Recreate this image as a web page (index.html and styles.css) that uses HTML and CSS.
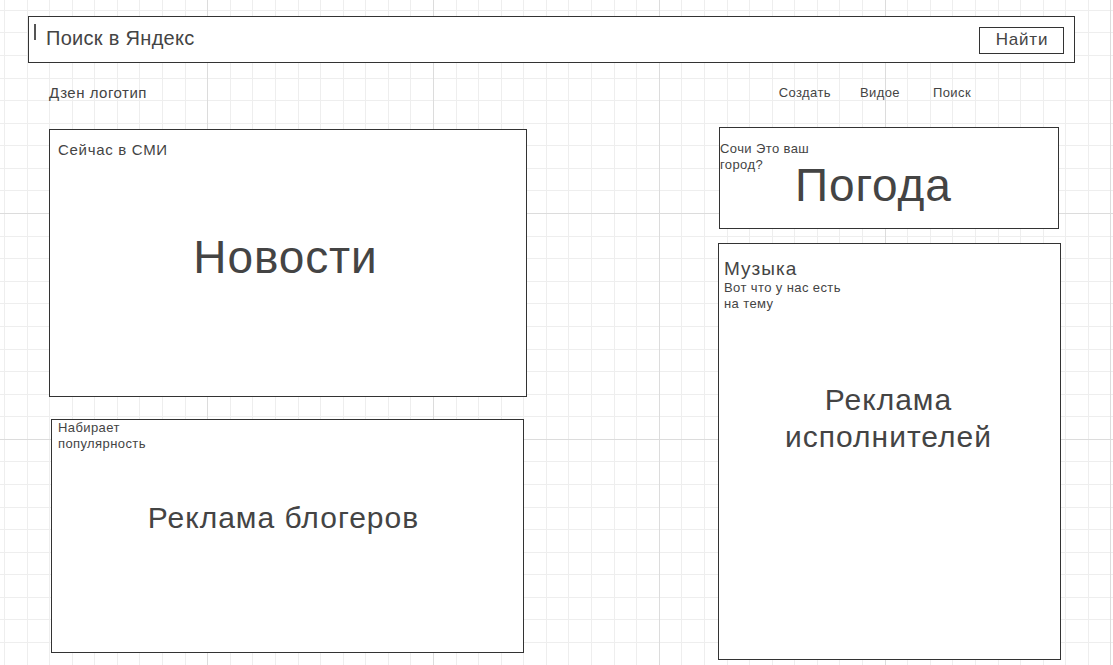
FILE: index.html
```html
<!DOCTYPE html>
<html lang="ru">
<head>
<meta charset="utf-8">
<title>Яндекс макет</title>
<link rel="stylesheet" href="styles.css">
</head>
<body>
<div class="page">
  <header class="search">
    <span class="caret"></span>
    <span class="search-text">Поиск в Яндекс</span>
    <button class="find">Найти</button>
  </header>
  <nav class="nav">
    <span class="logo">Дзен логотип</span>
    <div class="links">
      <span class="link">Создать</span>
      <span class="link">Видое</span>
      <span class="link link-last">Поиск</span>
    </div>
  </nav>
  <main class="main">
    <section class="col-left">
      <div class="box news">
        <div class="small-title">Сейчас в СМИ</div>
        <div class="big news-big">Новости</div>
      </div>
      <div class="box blogs">
        <div class="note">Набирает<br>популярность</div>
        <div class="mid blogs-big">Реклама блогеров</div>
      </div>
    </section>
    <section class="col-right">
      <div class="box weather">
        <div class="note weather-note">Сочи Это ваш<br>город?</div>
        <div class="big weather-big">Погода</div>
      </div>
      <div class="box music">
        <div class="music-title">Музыка</div>
        <div class="note music-note">Вот что у нас есть<br>на тему</div>
        <div class="mid music-big">Реклама<br>исполнителей</div>
      </div>
    </section>
  </main>
</div>
</body>
</html>
```
FILE: styles.css
```css
html, body {
  margin: 0;
  padding: 0;
  height: 100%;
}
body {
  font-family: "Liberation Sans", Arial, sans-serif;
  color: #444;
  background-color: #fff;
  background-image:
    repeating-linear-gradient(to right, transparent 0 207.2px, #dcdcdc 207.2px 208.2px, transparent 208.2px 225.8px),
    repeating-linear-gradient(to bottom, transparent 0 213px, #dcdcdc 213px 214px, transparent 214px 225.8px),
    repeating-linear-gradient(to right, transparent 0 4px, #eeeeee 4px 5px, transparent 5px 22.58px),
    repeating-linear-gradient(to bottom, transparent 0 9.8px, #eeeeee 9.8px 10.8px, transparent 10.8px 22.58px);
  overflow: hidden;
}
.page {
  padding-top: 16px;
}
.search {
  box-sizing: border-box;
  margin-left: 28px;
  width: 1047px;
  height: 47px;
  border: 1px solid #333;
  background: #fff;
  display: flex;
  align-items: center;
  position: relative;
}
.caret {
  position: absolute;
  left: 5px;
  top: 7px;
  width: 2px;
  height: 16px;
  background: #555;
}
.search-text {
  margin-left: 17px;
  margin-top: -3px;
  font-size: 20px;
  letter-spacing: 0.3px;
}
.find {
  margin-left: auto;
  margin-right: 10px;
  margin-top: 1px;
  box-sizing: border-box;
  width: 85px;
  height: 27px;
  border: 1px solid #333;
  background: #fff;
  font-family: inherit;
  font-size: 17px;
  letter-spacing: 0.8px;
  color: #444;
  padding: 0 0 0 1px;
}
.nav {
  display: flex;
  align-items: center;
  margin: 20px 0 0 49px;
  height: 18px;
}
.logo {
  font-size: 15px;
  letter-spacing: 0.5px;
}
.links {
  display: flex;
  margin-left: auto;
  margin-right: 142px;
  gap: 29px;
  font-size: 13px;
  letter-spacing: 0.4px;
}
.link-last {
  margin-left: 4px;
}
.main {
  display: flex;
  margin-top: 28px;
}
.col-left {
  margin-left: 49px;
  width: 478px;
}
.col-right {
  margin-left: 191px;
  margin-top: -2px;
  width: 343px;
}
.box {
  box-sizing: border-box;
  border: 1px solid #333;
  background: #fff;
}
.news {
  width: 478px;
  height: 268px;
  padding: 11px 0 0 8px;
}
.small-title {
  font-size: 15px;
  letter-spacing: 0.7px;
}
.big {
  font-size: 46px;
  line-height: 1.15;
  letter-spacing: 0.9px;
}
.mid {
  font-size: 30px;
  line-height: 37px;
  letter-spacing: 1px;
}
.news-big {
  text-align: center;
  margin-top: 73px;
  padding-right: 13px;
}
.blogs {
  width: 473px;
  height: 234px;
  margin: 22px 0 0 2px;
  padding: 0 0 0 6px;
}
.note {
  font-size: 13px;
  line-height: 16px;
  letter-spacing: 0.4px;
}
.blogs-big {
  text-align: center;
  margin-top: 47px;
  padding-right: 14px;
}
.weather {
  width: 340px;
  height: 102px;
  margin-left: 1px;
  padding-top: 13px;
}
.weather-big {
  margin-top: -14px;
  margin-left: 75px;
}
.music {
  width: 343px;
  height: 417px;
  margin-top: 14px;
  padding: 14px 0 0 5px;
}
.music-title {
  font-size: 19px;
  line-height: 22px;
  letter-spacing: 1px;
}
.music-big {
  text-align: center;
  margin-top: 69px;
  padding-right: 7px;
}
```
